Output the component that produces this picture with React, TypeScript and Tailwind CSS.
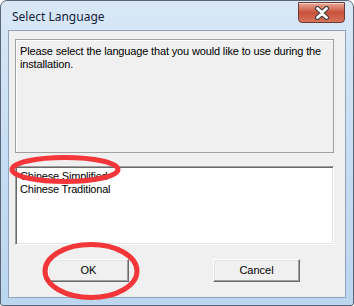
import React from "react";

function CloseButton() {
  return (
    <div className="absolute right-[8px] top-[1px] w-[47px] h-[21px] rounded-b-[4px] border border-[#6b3b33] bg-gradient-to-b from-[#e9a999] via-[#c9503a] to-[#d7735c] flex items-center justify-center shadow-[inset_0_1px_0_rgba(255,255,255,0.5)]">
      <svg width="16" height="14" viewBox="0 0 16 14">
        <path
          d="M3.5 2.5 L8 6.5 L12.5 2.5 M3.5 11.5 L8 7.5 L12.5 11.5"
          stroke="#3b3b3b"
          strokeWidth="5"
          strokeLinecap="round"
          fill="none"
        />
        <path
          d="M3.5 2.5 L8 6.5 L12.5 2.5 M3.5 11.5 L8 7.5 L12.5 11.5"
          stroke="#ffffff"
          strokeWidth="2.8"
          strokeLinecap="round"
          fill="none"
        />
      </svg>
    </div>
  );
}

function Button({ label, width }: { label: string; width: string }) {
  return (
    <div
      className={`${width} h-[23px] flex items-center justify-center bg-[#f0f0f0] border border-t-white border-l-white border-b-[#696969] border-r-[#696969] shadow-[inset_-1px_-1px_0_#a0a0a0,inset_1px_1px_0_#e3e3e3] text-[11px] text-black`}
    >
      {label}
    </div>
  );
}

export default function App() {
  return (
    <div
      className="relative w-[354px] h-[306px] flex flex-col rounded-t-[7px] rounded-b-[3px] border border-[#5b6776] bg-gradient-to-b from-[#d9e8f7] via-[#c6ddf3] to-[#bcd6ef] overflow-hidden"
      style={{ fontFamily: '"Liberation Sans", Arial, sans-serif' }}
    >
      {/* Title bar */}
      <div className="h-[29px] flex items-center pl-[11px] pt-[2px]">
        <span
          className="text-[12px] text-[#15233a]"
          style={{ fontFamily: '"Noto Sans", "Open Sans", sans-serif' }}
        >
          Select Language
        </span>
      </div>
      <CloseButton />

      {/* Client area */}
      <div className="flex-1 mx-[7px] mb-[7px] border border-[#8fa3b8] bg-[#f0f0f0] flex flex-col pt-[8px] pl-[6px]">
        {/* Message group */}
        <div className="w-[319px] h-[114px] border border-[#a0a0a0] shadow-[inset_1px_1px_0_#ffffff] px-[4px] pt-[5px] text-[11px] leading-[13px] tracking-[-0.15px] text-black">
          Please select the language that you would like to use during the
          installation.
        </div>

        {/* Language list */}
        <div className="mt-[13px] w-[319px] h-[79px] bg-white border border-t-[#a0a0a0] border-l-[#a0a0a0] border-b-white border-r-white shadow-[inset_1px_1px_0_#696969,inset_-1px_-1px_0_#e3e3e3] px-[4px] pt-[3px] text-[11px] leading-[13px] tracking-[-0.2px] text-black">
          <div>Chinese Simplified</div>
          <div>Chinese Traditional</div>
        </div>

        {/* Buttons */}
        <div className="mt-[14px] flex">
          <div className="ml-[33px]">
            <Button label="OK" width="w-[81px]" />
          </div>
          <div className="ml-[84px]">
            <Button label="Cancel" width="w-[87px]" />
          </div>
        </div>
      </div>

      {/* Red annotation marks */}
      <svg
        className="absolute left-0 top-0 pointer-events-none"
        width="354"
        height="306"
        viewBox="0 0 354 306"
      >
        <ellipse cx="64" cy="168.5" rx="53" ry="12" fill="none" stroke="#f2363a" strokeWidth="5" />
        <ellipse cx="90" cy="270" rx="46" ry="26.5" fill="none" stroke="#f2363a" strokeWidth="5" />
      </svg>
    </div>
  );
}
